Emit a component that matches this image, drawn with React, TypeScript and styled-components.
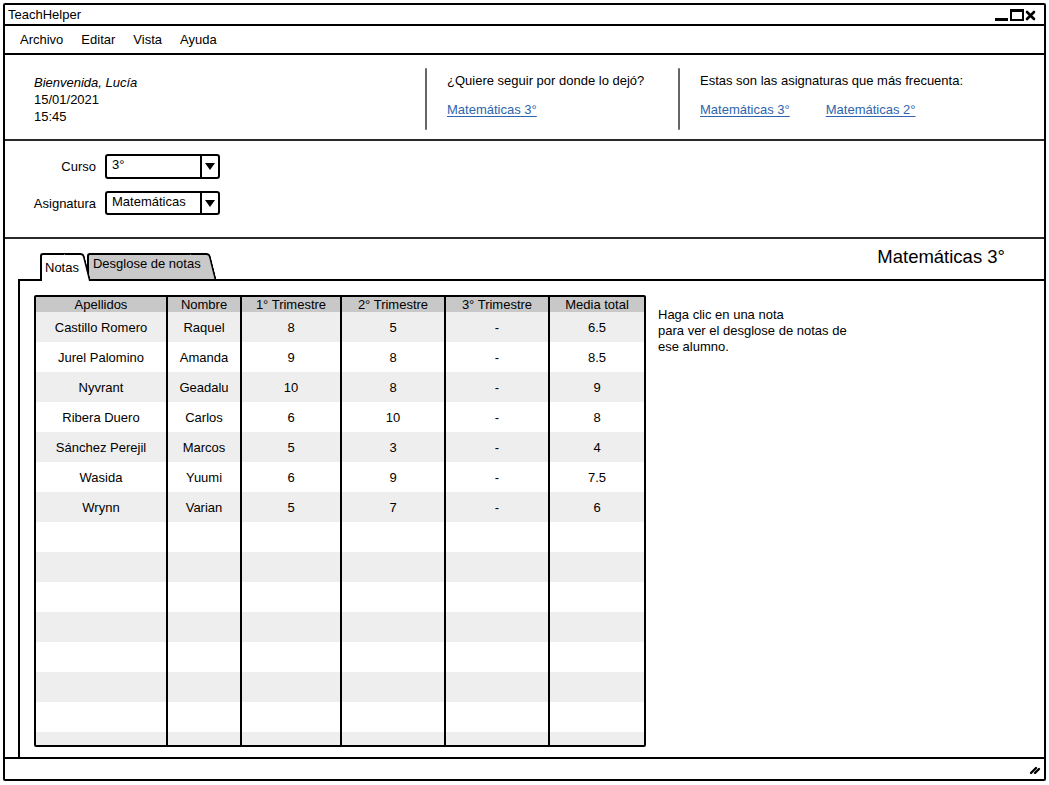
import React from "react";
import styled, { createGlobalStyle } from "styled-components";

const GlobalStyle = createGlobalStyle`
  html, body {
    margin: 0;
    padding: 0;
    background: #fff;
  }
  body {
    font-family: "Liberation Sans", Arial, sans-serif;
    font-size: 13px;
    color: #000;
  }
`;

const Window = styled.div`
  margin: 3px;
  width: 1043px;
  height: 778px;
  box-sizing: border-box;
  border: 2px solid #000;
  border-radius: 2px;
  display: flex;
  flex-direction: column;
  overflow: hidden;
`;

const TitleBar = styled.div`
  height: 21px;
  box-sizing: border-box;
  border-bottom: 2px solid #000;
  display: flex;
  align-items: center;
  justify-content: space-between;
  padding: 0 6px 0 3px;
`;

const Controls = styled.div`
  display: flex;
  align-items: center;
`;

const MenuBar = styled.div`
  height: 29px;
  box-sizing: border-box;
  border-bottom: 2px solid #000;
  display: flex;
  align-items: center;
  gap: 18px;
  padding: 0 0 0 15px;
`;

const MenuItem = styled.span`
  line-height: 16px;
`;

const Header = styled.div`
  height: 86px;
  box-sizing: border-box;
  border-bottom: 2px solid #2a2a2a;
  display: flex;
  align-items: flex-start;
  padding-top: 13px;
`;

const Welcome = styled.div`
  width: 391px;
  padding: 6px 0 0 29px;
  line-height: 17px;
`;

const Italic = styled.div`
  font-style: italic;
`;

const Divider = styled.div`
  width: 0;
  height: 62px;
  border-left: 2px solid #666;
  border-radius: 3px;
`;

const Section = styled.div<{ $w?: number }>`
  ${(p) => (p.$w ? `width: ${p.$w}px;` : "flex: 1;")}
  padding: 5px 0 0 20px;
  display: flex;
  flex-direction: column;
  gap: 12px;
  line-height: 16px;
`;

const LinkRow = styled.div`
  display: flex;
  gap: 36px;
  padding-top: 1px;
`;

const Link = styled.a`
  color: #2d64ad;
  text-decoration: underline;
  text-underline-offset: 2px;
  cursor: pointer;
`;

const Filters = styled.div`
  height: 98px;
  box-sizing: border-box;
  border-bottom: 2px solid #2a2a2a;
  padding: 13px 0 0 29px;
  display: grid;
  grid-template-columns: 62px 115px;
  grid-auto-rows: max-content;
  column-gap: 9px;
  row-gap: 12px;
  align-items: center;
`;

const Label = styled.label`
  justify-self: end;
`;

const Combo = styled.div<{ $h: number }>`
  height: ${(p) => p.$h}px;
  box-sizing: border-box;
  border: 2px solid #000;
  border-radius: 3px;
  display: flex;
`;

const ComboValue = styled.div`
  flex: 1;
  padding: 1px 0 0 5px;
  line-height: 16px;
`;

const ComboButton = styled.div`
  width: 16px;
  border-left: 2px solid #000;
  display: flex;
  align-items: center;
  justify-content: center;
  &::after {
    content: "";
    border-left: 5px solid transparent;
    border-right: 5px solid transparent;
    border-top: 7px solid #000;
  }
`;

const Main = styled.div`
  flex: 1;
  display: flex;
  flex-direction: column;
  padding: 14px 0 0 13px;
  min-height: 0;
`;

const TabRow = styled.div`
  display: flex;
  justify-content: space-between;
  align-items: flex-start;
  padding-left: 22px;
  height: 26px;
`;

const Tabs = styled.div`
  display: flex;
  align-items: flex-end;
  height: 26px;
`;

const Tab = styled.div<{ $active?: boolean }>`
  position: relative;
  height: 26px;
  box-sizing: border-box;
  padding: ${(p) => (p.$active ? "7px 12px 0 5px" : "3px 16px 0 6px")};
  margin-left: ${(p) => (p.$active ? "0" : "-4px")};
  z-index: ${(p) => (p.$active ? 2 : 1)};
  line-height: 16px;
  &::before {
    content: "";
    position: absolute;
    left: 0;
    top: 0;
    bottom: -2px;
    right: 10px;
    background: ${(p) => (p.$active ? "#fff" : "#c9c9c9")};
    border: 2px solid #000;
    border-right: none;
    border-bottom: none;
    border-top-left-radius: 3px;
  }
  &::after {
    content: "";
    position: absolute;
    top: 0;
    bottom: -2px;
    right: 0;
    width: 18px;
    background: ${(p) => (p.$active ? "#fff" : "#c9c9c9")};
    border-top: 2px solid #000;
    border-right: 2px solid #000;
    border-top-right-radius: 4px;
    transform: skewX(14deg);
    transform-origin: bottom right;
  }
`;

const TabText = styled.span`
  position: relative;
  z-index: 1;
`;

const PageTitle = styled.div`
  font-size: 18.5px;
  line-height: 20px;
  margin-top: -6px;
  padding-right: 39px;
`;

const Panel = styled.div`
  flex: 1;
  border-top: 2px solid #000;
  border-left: 2px solid #000;
  padding: 14px 0 0 14px;
  display: flex;
  align-items: flex-start;
  gap: 12px;
  position: relative;
  z-index: 1;
`;

const Table = styled.div`
  width: 612px;
  height: 452px;
  box-sizing: border-box;
  border: 2px solid #000;
  border-radius: 2px;
  overflow: hidden;
`;

const Row = styled.div<{ $kind: "head" | "odd" | "even" }>`
  display: grid;
  grid-template-columns: 132px 74px 100px 104px 104px 1fr;
  height: ${(p) => (p.$kind === "head" ? 15 : 30)}px;
  background: ${(p) =>
    p.$kind === "head" ? "#c8c8c8" : p.$kind === "odd" ? "#eeeeee" : "#fff"};
`;

const Cell = styled.div`
  box-sizing: border-box;
  border-right: 2px solid #000;
  display: flex;
  align-items: center;
  justify-content: center;
  white-space: nowrap;
  &:last-child {
    border-right: none;
  }
`;

const Hint = styled.div`
  margin-top: 12px;
  line-height: 16px;
`;

const StatusBar = styled.div`
  height: 22px;
  box-sizing: border-box;
  border-top: 2px solid #000;
  display: flex;
  align-items: center;
  justify-content: flex-end;
  padding-right: 3px;
`;

const grades = [
  ["Castillo Romero", "Raquel", "8", "5", "-", "6.5"],
  ["Jurel Palomino", "Amanda", "9", "8", "-", "8.5"],
  ["Nyvrant", "Geadalu", "10", "8", "-", "9"],
  ["Ribera Duero", "Carlos", "6", "10", "-", "8"],
  ["Sánchez Perejil", "Marcos", "5", "3", "-", "4"],
  ["Wasida", "Yuumi", "6", "9", "-", "7.5"],
  ["Wrynn", "Varian", "5", "7", "-", "6"],
];

const columns = [
  "Apellidos",
  "Nombre",
  "1° Trimestre",
  "2° Trimestre",
  "3° Trimestre",
  "Media total",
];

const WindowControls = () => (
  <Controls>
    <svg width="44" height="14" viewBox="0 0 44 14">
      <rect x="1" y="10" width="13" height="3" fill="#000" />
      <rect x="17" y="2" width="12" height="10" fill="none" stroke="#000" strokeWidth="2" />
      <rect x="17" y="1" width="12" height="3" fill="#000" />
      <path d="M33 4 L40 11 M40 4 L33 11" stroke="#000" strokeWidth="2.6" strokeLinecap="round" />
    </svg>
  </Controls>
);

const ResizeGrip = () => (
  <svg width="12" height="12" viewBox="0 0 12 12">
    <path d="M2 10 L7 5 M6 10 L10 6" stroke="#000" strokeWidth="2.4" strokeLinecap="round" />
  </svg>
);

export default function App() {
  const rows = [...grades];
  while (rows.length < 15) rows.push(["", "", "", "", "", ""]);

  return (
    <>
      <GlobalStyle />
      <Window>
        <TitleBar>
          <span>TeachHelper</span>
          <WindowControls />
        </TitleBar>
        <MenuBar>
          <MenuItem>Archivo</MenuItem>
          <MenuItem>Editar</MenuItem>
          <MenuItem>Vista</MenuItem>
          <MenuItem>Ayuda</MenuItem>
        </MenuBar>
        <Header>
          <Welcome>
            <Italic>Bienvenida, Lucía</Italic>
            <div>15/01/2021</div>
            <div>15:45</div>
          </Welcome>
          <Divider />
          <Section $w={231}>
            <span>¿Quiere seguir por donde lo dejó?</span>
            <LinkRow>
              <Link>Matemáticas 3°</Link>
            </LinkRow>
          </Section>
          <Divider />
          <Section>
            <span>Estas son las asignaturas que más frecuenta:</span>
            <LinkRow>
              <Link>Matemáticas 3°</Link>
              <Link>Matemáticas 2°</Link>
            </LinkRow>
          </Section>
        </Header>
        <Filters>
          <Label>Curso</Label>
          <Combo $h={25}>
            <ComboValue>3°</ComboValue>
            <ComboButton />
          </Combo>
          <Label>Asignatura</Label>
          <Combo $h={24}>
            <ComboValue>Matemáticas</ComboValue>
            <ComboButton />
          </Combo>
        </Filters>
        <Main>
          <TabRow>
            <Tabs>
              <Tab $active>
                <TabText>Notas</TabText>
              </Tab>
              <Tab>
                <TabText>Desglose de notas</TabText>
              </Tab>
            </Tabs>
            <PageTitle>Matemáticas 3°</PageTitle>
          </TabRow>
          <Panel>
            <Table>
              <Row $kind="head">
                {columns.map((c) => (
                  <Cell key={c}>{c}</Cell>
                ))}
              </Row>
              {rows.map((r, i) => (
                <Row key={i} $kind={i % 2 === 0 ? "odd" : "even"}>
                  {r.map((v, j) => (
                    <Cell key={j}>{v}</Cell>
                  ))}
                </Row>
              ))}
            </Table>
            <Hint>
              Haga clic en una nota
              <br />
              para ver el desglose de notas de
              <br />
              ese alumno.
            </Hint>
          </Panel>
        </Main>
        <StatusBar>
          <ResizeGrip />
        </StatusBar>
      </Window>
    </>
  );
}
